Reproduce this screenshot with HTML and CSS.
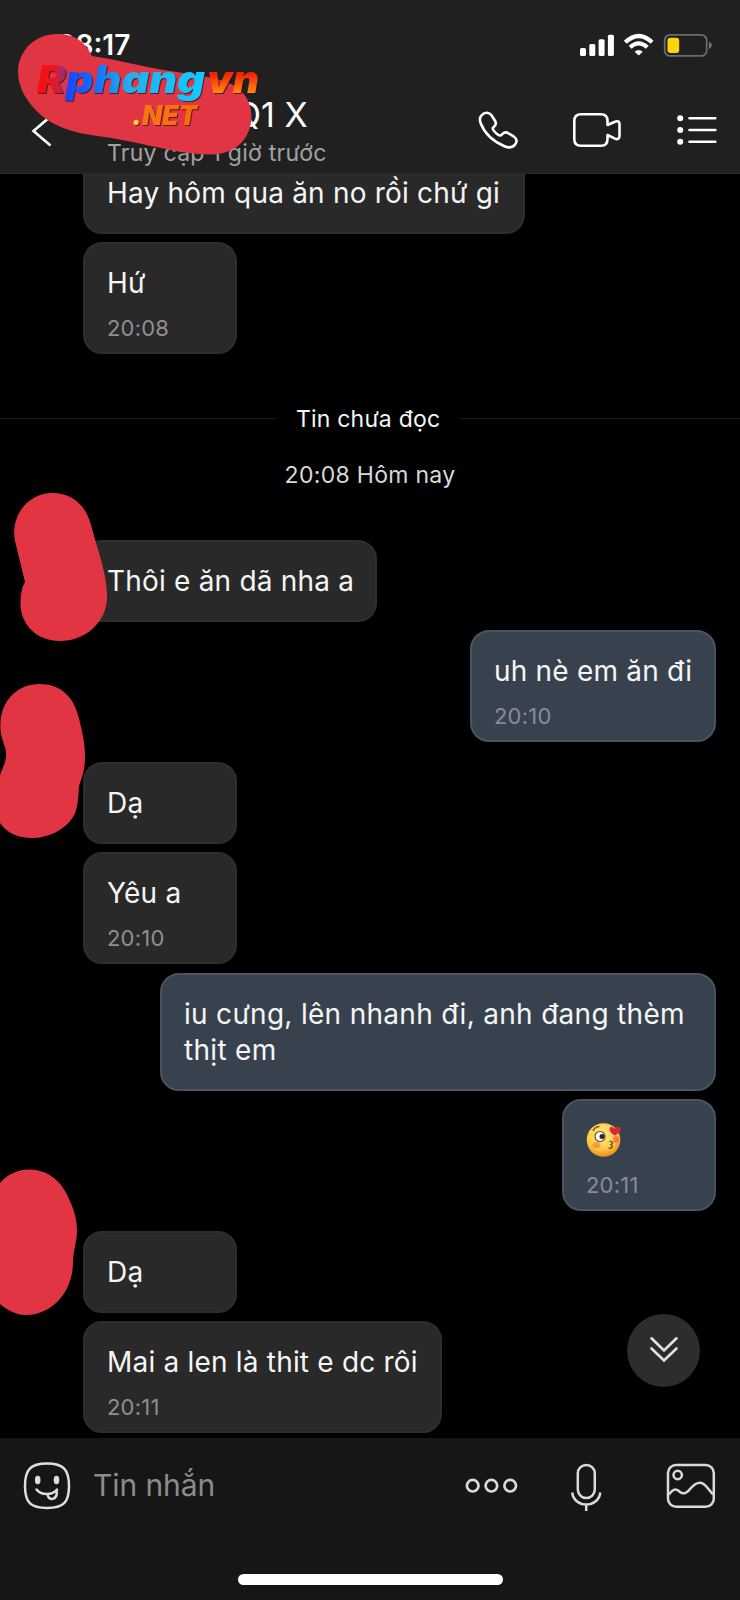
FILE: index.html
```html
<!DOCTYPE html>
<html lang="vi">
<head>
<meta charset="utf-8">
<title>Tin nhắn</title>
<link rel="stylesheet" href="styles.css">
</head>
<body>
<div class="phone">
  <header class="header">
    <div class="status">
      <span class="clock">08:17</span>
      <svg class="status-icons" width="134" height="26" viewBox="578 32 134 26">
        <g fill="#fff">
          <rect x="580" y="48" width="6" height="8" rx="1.5"/>
          <rect x="589.300" y="44" width="6" height="12" rx="1.5"/>
          <rect x="598.600" y="39.300" width="6" height="16.700" rx="1.500"/>
          <rect x="607.900" y="34.700" width="6" height="21.300" rx="1.500"/>
          <path d="M638.700 55.500 L634.600 51.700 Q638.700 48.200 642.800 51.700 Z"/>
        </g>
        <g fill="none" stroke="#fff" stroke-width="4.200">
          <path d="M625.300 42.300 Q638.700 29.700 652.100 42.300"/>
          <path d="M630.100 47.300 Q638.700 39.500 647.300 47.300"/>
        </g>
        <rect x="664.700" y="34.900" width="42" height="21" rx="5.500" fill="none" stroke="#6b6b6b" stroke-width="1.800"/>
        <rect x="667.500" y="37.700" width="11.700" height="15.200" rx="3" fill="#fcd60a"/>
        <path d="M709 41.500 Q711.800 43 711.800 45.300 Q711.800 47.600 709 49 Z" fill="#777"/>
      </svg>
    </div>
    <div class="navbar">
      <svg class="back" width="24" height="34" viewBox="30 114 24 34"><path d="M51 116 L33.500 131 L50.500 145.500" fill="none" stroke="#fff" stroke-width="2.600"/></svg>
      <div class="titles">
        <div class="name">Q1 X</div>
        <div class="seen">Truy cập 1 giờ trước</div>
      </div>
      <svg class="nav-icons" width="242" height="44" viewBox="476 108 242 44" fill="none" stroke="#fff" stroke-width="2.600" stroke-linecap="round" stroke-linejoin="round">
        <path d="M481.500 115.300 C484.500 112 489 112 491.300 115 L495 120.700 C496.800 123.500 496 125.200 493.500 127.200 C492 128.500 492.800 129.600 494 131 C495.500 132.800 497 134.200 498.500 135 C500.500 136.400 501.500 135 502.500 133.900 C504.300 132 506.500 132 508.500 133.300 L514 136.700 C517 138.800 517.300 142 515 144.600 C512.500 147.500 508.500 148 504.500 146.200 C493.500 141.500 484.500 133 480.700 123.200 C479.300 119.500 479.600 117.300 481.500 115.300 Z"/>
        <path d="M607.500 125 V121 C607.500 116.500 605.500 114.200 601 114.200 H581 C576.500 114.200 574.300 116.500 574.300 121 V139 C574.300 143.500 576.500 145.800 581 145.800 H601 C605.500 145.800 607.500 143.500 607.500 139 V135 L615 138.700 C618 139.800 619.500 138.500 619.500 136 V124 C619.500 121.500 618 120.500 615 121.700 Z"/>
        <path d="M689.500 118.300 H715.300 M689.500 130 H715.300 M689.500 141.700 H715.300"/>
        <g fill="#fff" stroke="none"><circle cx="680.200" cy="118.300" r="3"/><circle cx="680.200" cy="130" r="3"/><circle cx="680.200" cy="141.700" r="3"/></g>
      </svg>
    </div>
  </header>

  <main class="chat">
    <div class="bubble w442">Hay hôm qua ăn no rồi chứ gi</div>
    <div class="bubble w154">Hứ<time>20:08</time></div>
    <div class="unread"><span>Tin chưa đọc</span></div>
    <div class="day">20:08 Hôm nay</div>
    <div class="bubble w293">Thôi e ăn dã nha a</div>
    <div class="bubble mine w246">uh nè em ăn đi<time>20:10</time></div>
    <div class="bubble new-group w154">Dạ</div>
    <div class="bubble w154">Yêu a<time>20:10</time></div>
    <div class="bubble mine w556">iu cưng, lên nhanh đi, anh đang thèm thịt em</div>
    <div class="bubble mine w154"><svg class="emoji" width="36" height="36" viewBox="0 0 36 36">
        <defs><radialGradient id="face" cx=".45" cy=".35" r=".65"><stop offset="0" stop-color="#ffec8f"/><stop offset=".65" stop-color="#fdcb45"/><stop offset="1" stop-color="#ee8b1d"/></radialGradient></defs>
        <circle cx="17.500" cy="18" r="16.800" fill="url(#face)"/>
        <ellipse cx="10.500" cy="23" rx="4" ry="3" fill="#f47b3c" opacity=".65"/>
        <ellipse cx="30" cy="17.500" rx="3" ry="3.500" fill="#f05b38" opacity=".65"/>
        <circle cx="14" cy="14.500" r="5" fill="#fff" stroke="#64401f" stroke-width="1.100"/>
        <circle cx="16" cy="14.500" r="2.500" fill="#40201a"/>
        <path d="M7 9 Q9 4.500 13.500 4.500" fill="none" stroke="#85501b" stroke-width="1.400"/>
        <path d="M23.500 19.500 C27 19 27.500 22 24.500 22.700 C27.500 23.500 26.500 27 22.500 26" fill="none" stroke="#653e1d" stroke-width="1.200"/>
        <path d="M29 13.500 C23.500 11 22.500 6.500 24.500 5.300 C26.500 4.200 28 5.700 28.800 7 C29.500 4.500 34 4 34.700 6.500 C35.300 9 32 11.500 29 13.500 Z" fill="#d92535"/>
      </svg><time>20:11</time></div>
    <div class="bubble new-group w154">Dạ</div>
    <div class="bubble w359">Mai a len là thit e dc rôi<time>20:11</time></div>
    <div class="jump"><svg width="30" height="28" viewBox="0 0 30 28" fill="none" stroke="#e2e2e2" stroke-width="2.600" stroke-linecap="round"><path d="M2.500 2.300 L15 14.500 L27.500 2.300 M2.500 12.500 L15 24.500 L27.500 12.500"/></svg></div>
  </main>

  <footer class="composer">
    <div class="input-row">
      <svg width="48" height="48" viewBox="0 0 48 48" fill="none" stroke="#dedede" stroke-width="2.500" stroke-linecap="round">
        <path d="M24 1.500 C40.500 1.500 46 7.500 46 24 C46 40.500 40.500 46 24 46 C7.500 46 2 40.500 2 24 C2 7.500 7.500 1.500 24 1.500 Z"/>
        <g fill="#dedede" stroke="none"><ellipse cx="14.700" cy="18" rx="2.800" ry="4.300"/><ellipse cx="33.500" cy="18" rx="2.800" ry="4.300"/></g>
        <path d="M13.500 27.500 C18 33.500 29.500 33.500 34 27.500 M24.500 32 C25 39.500 34.500 38.500 33.700 29"/>
      </svg>
      <span class="placeholder">Tin nhắn</span>
      <svg class="tools" width="252" height="52" viewBox="464 1462 252 52" fill="none" stroke="#dadada" stroke-width="2.500">
        <g stroke-width="2.700"><circle cx="472.700" cy="1485.700" r="5.800"/><circle cx="491.400" cy="1485.700" r="5.800"/><circle cx="510.200" cy="1485.700" r="5.800"/></g>
        <rect x="577.800" y="1465" width="17" height="33" rx="8.500"/>
        <path d="M572.200 1492.500 C574 1508.500 598.500 1508.500 600.300 1492.500 M586.200 1504.500 V1511"/>
        <rect x="668" y="1465" width="45.800" height="41.700" rx="8"/>
        <circle cx="677.700" cy="1475" r="4.200"/>
        <path d="M669 1494.500 C674 1487.500 677 1489 680 1492 C684 1495 687.500 1492.500 690.500 1488.500 C698 1480 703 1481.500 708 1488.500 L713 1494.500"/>
      </svg>
    </div>
    <div class="home"></div>
  </footer>

  <svg class="overlay" width="740" height="1600" viewBox="0 0 740 1600">
    <defs>
      <linearGradient id="cool" gradientUnits="userSpaceOnUse" x1="38" y1="0" x2="204" y2="0"><stop offset="0" stop-color="#fa0d08"/><stop offset=".1" stop-color="#e51925"/><stop offset=".16" stop-color="#982f79"/><stop offset=".175" stop-color="#1648ff"/><stop offset=".33" stop-color="#126cff"/><stop offset=".55" stop-color="#23afed"/><stop offset="1" stop-color="#11caff"/></linearGradient>
      <linearGradient id="warm" x1="0" y1="0" x2="0" y2="1"><stop offset=".4" stop-color="#f02208"/><stop offset=".8" stop-color="#ff8a09"/></linearGradient>
      <linearGradient id="net" gradientUnits="userSpaceOnUse" x1="133" y1="0" x2="198" y2="0"><stop offset="0" stop-color="#ffe62d"/><stop offset=".1" stop-color="#ffd323"/><stop offset=".14" stop-color="#f27716"/><stop offset="1" stop-color="#ff6b00"/></linearGradient>
    </defs>
    <g fill="#e23543">
      <path d="M57 34 C77 34 86 44 92 56 C112 59 132 64 158 69 C187 74 207 75 227 82 C244 89 252 102 251.500 118 C250 141 234 154 211 154.500 C181 155 140 142 105 137 C79 134 58 129 42 116 C27 103 17.500 87 18 71 C19 49 36 34 57 34 Z"/>
      <path d="M52 493 C73 493 86 506 91 525 C96 545 107 573 107 595 C108 622 85 641 60 641 C36 641 20 624 20.500 602 C20.500 594 22 587 25 582 L15 541 C10 516 28 493 52 493 Z"/>
      <path d="M39 684 C61 684 73 697 78 715 C83 734 87 751 84 769 C83 776 80 782 79 786 C78 800 78 809 73 817 C65 830 48 838 32 838 C18 838 7 833 0 823 V775 C4 765 8 758 5 747 C1 736 0 731 0.500 722 C2 698 20 684 39 684 Z"/>
      <path d="M0 1183 C8 1174 18 1169.500 29 1169.500 C44 1169.500 57 1177 65 1191 C72 1204 77 1216 77 1231 C77 1241 73 1252 73 1262 C73 1292 52 1315 26 1315 C16 1315 7 1310 0 1304 Z"/>
    </g>
    <g class="logo">
      <text x="37" y="93" font-size="39" textLength="168" lengthAdjust="spacingAndGlyphs" fill="url(#cool)">Rphang</text>
      <text x="207" y="93" font-size="39" textLength="52" lengthAdjust="spacingAndGlyphs" fill="url(#warm)">vn</text>
      <text x="132" y="124.500" font-size="27" textLength="65" lengthAdjust="spacingAndGlyphs" fill="url(#net)">.NET</text>
    </g>
  </svg>
</div>
</body>
</html>
```
FILE: styles.css
```css
* { box-sizing: border-box; }
body {
  margin: 0;
  background: #000;
  font-family: Inter, "Liberation Sans", sans-serif;
  color: #f5f5f5;
}
svg { display: block; flex: none; }
.phone {
  position: relative;
  width: 740px;
  height: 1600px;
  overflow: hidden;
  display: flex;
  flex-direction: column;
}
.header {
  height: 173.500px;
  flex: none;
  background: #202020;
  border-bottom: 1px solid #292929;
}
.status {
  height: 90px;
  padding: 32px 28px 0 57px;
  display: flex;
  justify-content: space-between;
  align-items: flex-start;
}
.clock { font-size: 28px; line-height: 27px; font-weight: 600; color: #fff; }
.navbar { display: flex; padding: 0 22px 0 30px; }
.back { margin-top: 24px; }
.titles { flex: 1; padding-left: 53px; white-space: nowrap; }
.name { padding-left: 128px; font-size: 34px; line-height: 40px; margin-top: 5px; color: #fff; }
.seen { font-size: 23px; line-height: 28px; margin-top: 4px; letter-spacing: 0.270px; color: #a2a2a2; }
.nav-icons { margin-top: 18px; }

.chat {
  position: relative;
  flex: 1;
  overflow: hidden;
  display: flex;
  flex-direction: column;
  align-items: flex-start;
  padding: 0 24px 0 83px;
}
.bubble {
  flex: none;
  border: 2px solid #2e2e2e;
  border-radius: 19px;
  background: #292929;
  padding: 21px 20px 21px 22px;
  margin-bottom: 8.500px;
  font-size: 28px;
  line-height: 36px;
  letter-spacing: 0.200px;
}
.bubble:first-child { margin-top: -22px; }
.bubble time {
  display: block;
  margin: 15px 0 -9px;
  font-size: 22px;
  line-height: 24px;
  color: #8f8f8f;
}
.mine { align-self: flex-end; background: #38424f; border-color: #4a5460; }
.mine time { color: #868d96; }
.new-group { margin-top: 11px; }
.w154 { width: 154px; }
.w246 { width: 246px; }
.w293 { width: 294px; }
.w359 { width: 359px; }
.w442 { width: 442px; }
.w556 { width: 556px; letter-spacing: 0.300px; }

.unread {
  align-self: stretch;
  display: flex;
  align-items: center;
  gap: 20px;
  margin: 41px -24px 0 -83px;
  font-size: 23px;
  line-height: 30px;
  letter-spacing: 0.200px;
}
.unread::before, .unread::after { content: ""; flex: 1; height: 1px; background: #1b1b1b; }
.unread::before { flex: none; width: 276px; }
.day {
  align-self: stretch;
  margin: 26px -24px 50px -83px;
  font-size: 23px;
  line-height: 30px;
  letter-spacing: 0.300px;
  text-align: center;
  color: #d9d9d9;
}
.jump {
  position: absolute;
  left: 627px;
  top: 1140px;
  width: 73px;
  height: 73px;
  border-radius: 50%;
  background: #2d2d2d;
  display: grid;
  place-items: center;
}

.composer {
  flex: none;
  height: 162px;
  background: #161616;
}
.input-row { display: flex; align-items: flex-start; height: 96px; padding: 24px 24px 0 23px; }
.placeholder { flex: 1; margin-left: 22px; font-size: 30px; line-height: 46px; letter-spacing: -0.100px; color: #8c8c8c; }
.home { width: 265px; height: 10.500px; margin: 40px auto 0; border-radius: 6px; background: #fff; }

.overlay { position: absolute; left: 0; top: 0; pointer-events: none; }
.logo {
  font-family: Inter, "Liberation Sans", sans-serif;
  font-weight: 900;
  font-style: italic;
  filter: drop-shadow(1px 1.500px 0.500px rgba(45, 15, 35, .75));
}
```
